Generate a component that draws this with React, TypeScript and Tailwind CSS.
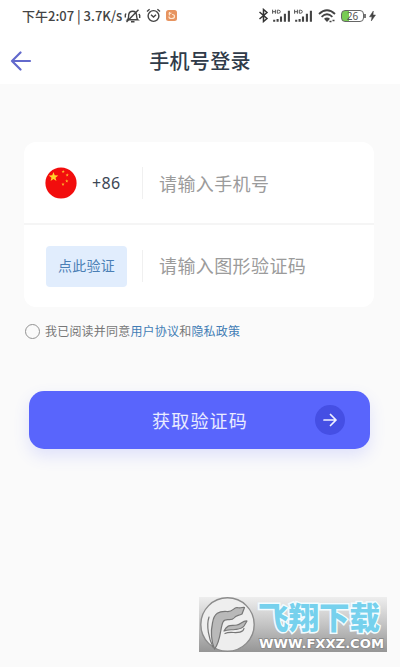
import { useState } from "react";

const STARS = [
  { x: 18.2, y: 4.6, r: 1.7 },
  { x: 22.2, y: 8, r: 1.7 },
  { x: 21.8, y: 14, r: 1.7 },
  { x: 18, y: 17.3, r: 1.7 },
];

function starPoints(cx: number, cy: number, r: number) {
  return Array.from({ length: 10 }, (_, i) => {
    const a = (Math.PI / 5) * i - Math.PI / 2;
    const d = i % 2 ? r * 0.42 : r;
    return `${cx + d * Math.cos(a)},${cy + d * Math.sin(a)}`;
  }).join(" ");
}

function Signal() {
  return (
    <svg className="h-3.5 w-[19px]" viewBox="0 0 19 14">
      <g stroke="#555" strokeWidth="1" fill="none">
        <path d="M.6 .7v4M3.4 .7v4M.6 2.700h2.800M5.300 1.200h1.200q1.800 0 1.800 1.500t-1.800 1.500H5.300z" />
      </g>
      <path
        d="M2.200 12.700v-2M5.600 12.700V9.900M9 12.700V7.600M12.900 12.700V4.800M16.900 12.700V1.800"
        stroke="#444"
        strokeWidth="2.100"
      />
    </svg>
  );
}

function StatusBar() {
  return (
    <div className="flex h-[31px] items-center pl-[22px] text-[#444]">
      <span className="w-[102px] whitespace-nowrap font-['Noto_Sans_CJK_SC',sans-serif] text-[13px] font-medium leading-none tracking-[0px]">
        下午2:07 | 3.7K/s
      </span>
      {/* Muted bell */}
      <svg className="h-4 w-[17px]" viewBox="0 0 17 16" fill="none" stroke="#444" strokeWidth="1.400">
        <path d="M3.500 11.800c1.300-1 1-3 1.200-5C5 4.500 6.500 3.200 8.700 3.200s3.600 1.300 3.800 3.600c.2 2 0 4 1.300 5zM7 13.700h3.500M2.500 14L14.500 1.800M2 5.500L1.300 7v2.500M15 6l.7 1.500v2.500" />
      </svg>
      {/* Alarm */}
      <svg className="ml-[5px] h-[15px] w-[15px]" viewBox="0 0 15 15" fill="none" stroke="#444" strokeWidth="1.400">
        <circle cx="7.500" cy="8" r="5.400" />
        <path d="M5 6.800l2.500 2.300L10 6.800M1 3.500L3.600 1.300M14 3.500l-2.600-2.200" />
      </svg>
      <svg className="ml-[5px] h-[11px] w-[11px]" viewBox="0 0 11 11">
        <rect width="11" height="11" rx="2.500" fill="#e79460" />
        <path d="M3.500 2v3.500M2.500 4l3-1M3 6.500q0 2 2 2h.5q3 0 3-2T6 4.500" stroke="#fde6d0" strokeWidth="1.200" fill="none" />
      </svg>
      <div className="ml-[81px] flex items-center">
        <svg className="h-[15px] w-[11px]" viewBox="0 0 11 15" fill="none" stroke="#333" strokeWidth="1.500">
          <path d="M1.500 4l7.500 6.500L5.500 13.500V1.500L9 4.500 1.500 11" />
        </svg>
        <span className="ml-[3px] flex gap-[3px]">
          <Signal />
          <Signal />
        </span>
        <svg className="ml-[5px] h-[14px] w-[18px]" viewBox="0 0 18 14" fill="none" stroke="#444" strokeWidth="1.800">
          <path d="M1 5Q9-2.500 17 5M3.600 7.800q5.400-5 10.800 0" />
          <path d="M6 9.700Q9 7.500 12 9.700L9 13z" fill="#444" stroke="none" />
          <path d="M11.500 12.500h2M14.500 11.500h2" strokeWidth="1.300" />
        </svg>
        <div className="relative ml-[5px] flex h-3 w-[23px] items-center justify-center rounded-[4px] border-[1.500px] border-[#666] bg-[linear-gradient(90deg,#79cb55_35%,#fff_35%)]">
          <span className="font-['Noto_Sans',sans-serif] text-[10px] leading-none text-[#555]">26</span>
          <span className="absolute -right-[3px] h-1 w-0.5 bg-[#777]" />
        </div>
        <svg className="ml-[5px] h-3 w-[7px]" viewBox="0 0 7 12">
          <path d="M4.300 1L.5 6.800H3L2.300 11 6.500 5H4z" fill="#444" stroke="#444" strokeWidth=".5" />
        </svg>
      </div>
    </div>
  );
}

function Flag() {
  return (
    <svg className="h-8 w-8" viewBox="0 0 32 32">
      <circle cx="16" cy="16" r="15.600" fill="#f20d0d" />
      <polygon points={starPoints(8.500, 10, 5)} fill="#ffd42a" />
      {STARS.map((s) => (
        <polygon key={s.y} points={starPoints(s.x, s.y, s.r)} fill="#ffb52a" />
      ))}
    </svg>
  );
}

function Watermark() {
  return (
    <div className="absolute left-[199px] top-[597px] flex h-[55px] w-[188px] bg-linear-to-b from-[#eeeeee] via-[#c4c4c4] to-[#969696]">
      <svg className="h-[55px] w-[57px] shrink-0" viewBox="0 0 57 55">
        <circle cx="28.500" cy="27.500" r="26.700" fill="#eeeeee" stroke="#8c8c8c" strokeWidth="1.400" />
        <g stroke="#777" strokeWidth="1.200" strokeLinejoin="round" strokeLinecap="round">
          <path
            d="M15.500 52C11 41 12 33 13.500 26 15 16 20 14 28 14.500 34 15 34 11 38 10.500 42 12 44 9.500 45.500 10.500L43 17C39 19 37 18 35 21 32 25 26 20 24 25 21 31 22 44 15.500 52Z"
            fill="#b9b9b9"
          />
          <path d="M25 34C29 26 33 29.500 38 28 42 27 44 23.500 48 24L45 29C43 32 40 32 36 32.500 32 33 28 32.500 25 34Z" fill="#b9b9b9" />
          <path d="M26 36.500C32 33.500 39 38 44 33.500L45 31.500M10 20C7 29 10 42 14 50" fill="none" />
        </g>
      </svg>
      <div className="flex min-w-0 flex-col pl-[2px] pt-[5px]">
        <div className="h-[33px] whitespace-nowrap text-[30.500px] font-black leading-[33px] text-[#76d1ed] [-webkit-text-stroke:3px_#f2fcff] [paint-order:stroke_fill]">
          飞翔下载
        </div>
        <svg className="h-[15px] w-[127px] overflow-visible" viewBox="0 0 127 15">
          <text
            x="1"
            y="12.500"
            textLength="125"
            lengthAdjust="spacingAndGlyphs"
            className="fill-white stroke-[#888] stroke-[1.500px] font-['DejaVu_Sans'] text-[12.500px] font-bold [paint-order:stroke_fill]"
          >
            WWW.FXXZ.COM
          </text>
        </svg>
      </div>
    </div>
  );
}

export default function App() {
  const [agreed, setAgreed] = useState(false);

  return (
    <div className="relative h-[667px] w-[400px] overflow-hidden bg-[#fafafa] font-['Roboto','Noto_Sans_CJK_SC',sans-serif]">
      <header className="h-[84px] bg-white">
        <StatusBar />
        <div className="grid h-[60px] grid-cols-[60px_1fr_60px] items-center">
          <button className="pl-2.5" aria-label="返回">
            <svg className="h-5 w-[22px]" viewBox="0 0 22 20" fill="none" stroke="#6269cc" strokeWidth="2.200" strokeLinecap="round" strokeLinejoin="round">
              <path d="M20 10H2M10.500 1.500L2 10l8.500 8.500" />
            </svg>
          </button>
          <h1 className="pt-0.5 text-center text-[20px] font-medium leading-none tracking-[0.3px] text-[#303b49]">手机号登录</h1>
        </div>
      </header>

      <main>
        <div className="ml-6 mt-[58px] h-[165px] w-[350px] rounded-xl bg-white">
          <div className="flex h-[83px] items-center border-b-2 border-[#f5f5f5] pl-[21px]">
            <Flag />
            <span className="ml-[15px] w-[50px] font-['Noto_Sans',sans-serif] text-[16px] tracking-[0.3px] text-[#3d4755]">+86</span>
            <span className="h-8 w-px bg-[#f0f0f0]" />
            <span className="ml-4 pt-[3px] text-[18px] tracking-[0.4px] text-[#9b9b9b]">请输入手机号</span>
          </div>
          <div className="flex h-[82px] items-center pl-[22px]">
            <button className="h-[41px] w-[81px] rounded-[4px] bg-[#e1edfd] pt-px text-[14px] tracking-[0.3px] text-[#4b7fb5]">点此验证</button>
            <span className="ml-[15px] h-8 w-px bg-[#f0f0f0]" />
            <span className="ml-4 pt-px text-[18px] tracking-[0.4px] text-[#9b9b9b]">请输入图形验证码</span>
          </div>
        </div>

        <div className="ml-[25px] mt-4 flex h-4 items-center">
          <button
            onClick={() => setAgreed((v) => !v)}
            aria-label="同意"
            className={agreed ? "size-[15px] rounded-full bg-[#5865fb]" : "size-[15px] rounded-full border border-[#929292]"}
          />
          <p className="ml-[5px] pt-0.5 text-[12px] leading-4 tracking-[0.2px] text-[#777]">
            我已阅读并同意<span className="text-[#427db5]">用户协议</span>和<span className="text-[#427db5]">隐私政策</span>
          </p>
        </div>

        <button className="ml-[29px] mt-[52px] flex h-[58px] w-[341px] items-center rounded-[15px] bg-[#5965fc] pl-[123px] shadow-[0_7px_16px_rgba(89,101,252,0.16)]">
          <span className="w-[163px] pt-0.5 text-left text-[18px] tracking-[1.200px] text-[#e9ebff]">获取验证码</span>
          <span className="flex size-[30px] items-center justify-center rounded-full bg-[#454fe4]">
            <svg className="h-3.5 w-3.5" viewBox="0 0 14 14" fill="none" stroke="#f0f1ff" strokeWidth="1.700" strokeLinecap="round" strokeLinejoin="round">
              <path d="M1 7h12M7.500 1.500L13 7l-5.500 5.500" />
            </svg>
          </span>
        </button>
      </main>

      <Watermark />
    </div>
  );
}
